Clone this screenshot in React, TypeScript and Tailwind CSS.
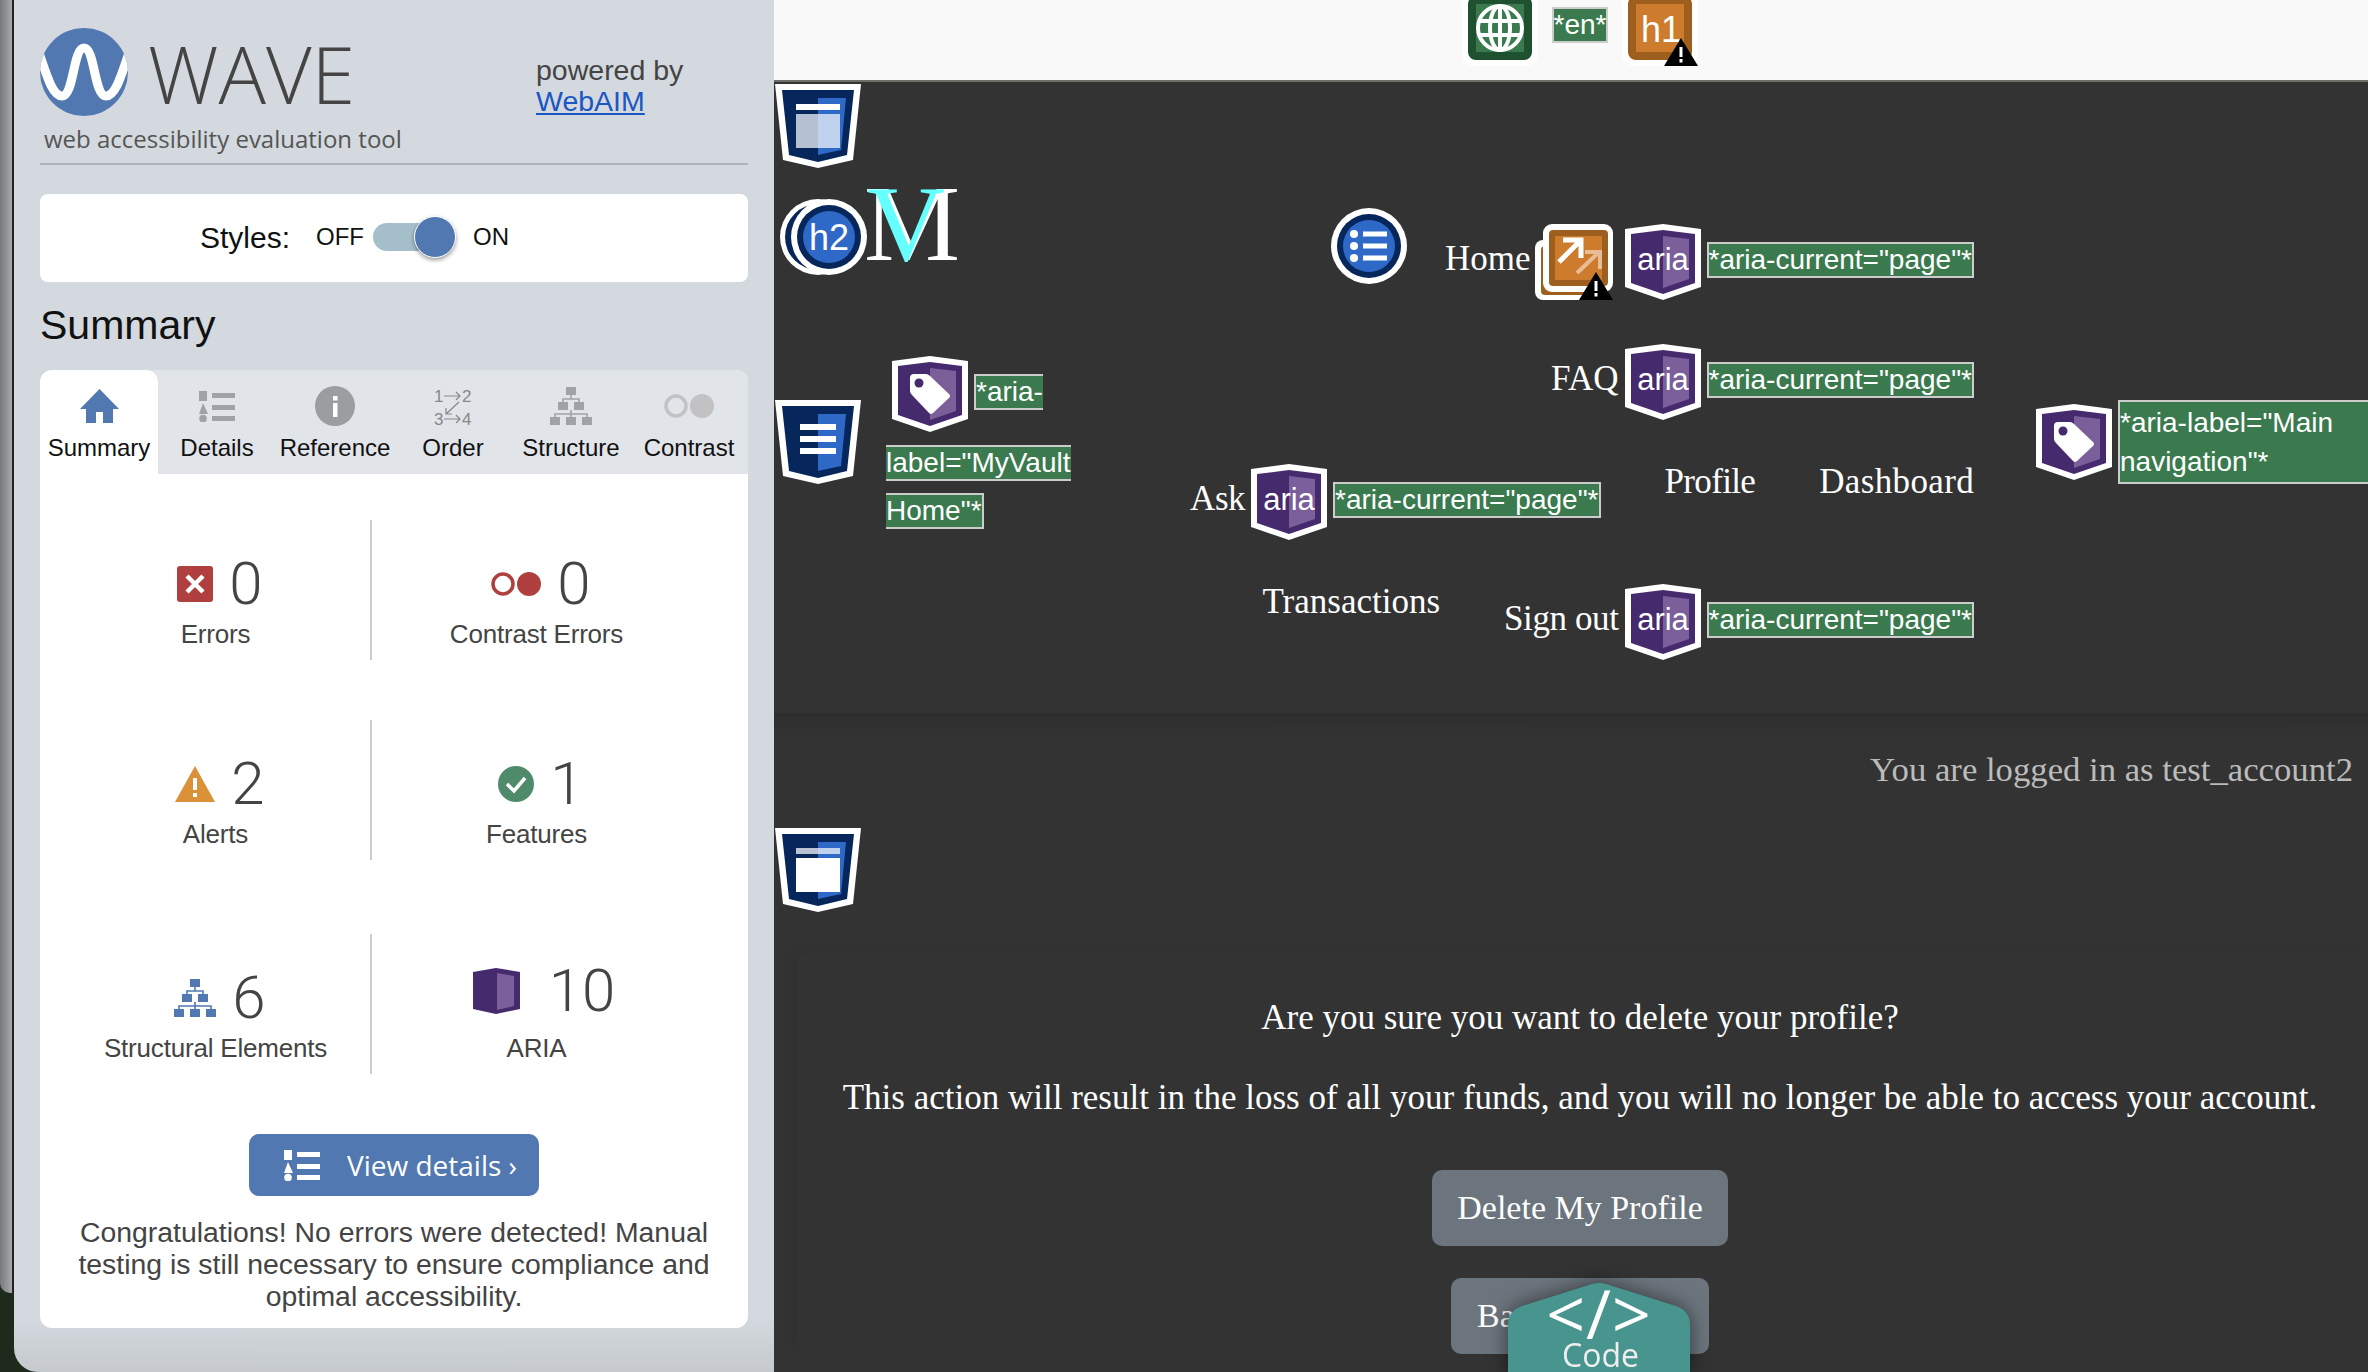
import React from 'react'

function Warn({ className }: { className: string }) {
  return (
    <svg viewBox="0 0 34 28" className={className}>
      <polygon points="17,0 34,28 0,28" fill="#000" />
      <rect x="15.5" y="9" width="3" height="10" fill="#fff" />
      <rect x="15.5" y="21" width="3" height="3.5" fill="#fff" />
    </svg>
  )
}

function AriaHex({ children }: { children?: React.ReactNode }) {
  return (
    <svg viewBox="0 0 76 76" className="w-[76px] h-[76px] shrink-0">
      <polygon points="0,5 38,0 76,5 76,63 38,76 0,63" fill="#fff" />
      <polygon points="6,10 38,6 70,10 70,59 38,70 6,59" fill="#452a6e" />
      <polygon points="38,12 64,15 64,55 38,64" fill="#7a5f9b" />
      {children}
    </svg>
  )
}

function AriaIcon() {
  return (
    <AriaHex>
      <text x="38" y="46" textAnchor="middle" fontSize="31" fill="#fff" fontFamily="Liberation Sans, sans-serif">aria</text>
    </AriaHex>
  )
}

function TagIcon() {
  return (
    <AriaHex>
      <path d="M22 18H34Q36 18 38 20L57 38Q59 40 57 42L41 57Q39 59 37 57L20 39Q18 37 18 35V22Q18 18 22 18Z" fill="#fff" />
      <circle cx="27" cy="27" r="4.5" fill="#452a6e" />
    </AriaHex>
  )
}

function Attr({ children, className = '' }: { children: React.ReactNode; className?: string }) {
  return (
    <span className={`block h-9 bg-[#3a7a4e] border-2 border-[#cccccc] text-white text-[28px] leading-[32px] whitespace-nowrap font-['Liberation_Sans',sans-serif] ${className}`}>
      {children}
    </span>
  )
}

function Shield({ kind }: { kind: 'header' | 'nav' | 'main' }) {
  return (
    <svg viewBox="0 0 86 84" className="w-[86px] h-[84px] shrink-0">
      <polygon points="0,0 86,0 78,76 43,84 8,76" fill="#fff" />
      <polygon points="7,6 79,6 72,71 43,78 14,71" fill="#06265c" />
      <polygon points="43,14 71,14 66,66 43,71" fill="#2f69c8" />
      {kind === 'header' && (
        <>
          <rect x="21" y="20" width="44" height="6" fill="#fff" />
          <rect x="21" y="30" width="22" height="34" fill="#b5c0d2" />
          <rect x="43" y="30" width="22" height="34" fill="#c0d2ee" />
        </>
      )}
      {kind === 'nav' && (
        <>
          <rect x="25" y="24" width="36" height="6" fill="#fff" />
          <rect x="25" y="36" width="36" height="6" fill="#fff" />
          <rect x="25" y="48" width="36" height="6" fill="#fff" />
        </>
      )}
      {kind === 'main' && (
        <>
          <rect x="21" y="20" width="22" height="6" fill="#b9c3d3" />
          <rect x="43" y="20" width="22" height="6" fill="#c0d2ee" />
          <rect x="21" y="30" width="44" height="34" fill="#fff" />
        </>
      )}
    </svg>
  )
}

function TreeIcon({ color, className }: { color: string; className: string }) {
  return (
    <svg viewBox="0 0 42 38" className={className}>
      <g fill={color}>
        <rect x="16" y="0" width="10" height="8" />
        <rect x="8" y="15" width="10" height="8" />
        <rect x="24" y="15" width="10" height="8" />
        <rect x="0" y="30" width="10" height="8" />
        <rect x="16" y="30" width="10" height="8" />
        <rect x="32" y="30" width="10" height="8" />
      </g>
      <path d="M21 8V12M13 15V12H29V15M21 23V27M5 30V27H37V30M21 27V30" stroke={color} strokeWidth="1.6" fill="none" />
    </svg>
  )
}

function DetailsIcon({ color, className }: { color: string; className: string }) {
  return (
    <svg viewBox="0 0 36 31" className={className}>
      <g fill={color}>
        <rect x="0" y="0" width="8" height="10" />
        <polygon points="4,12 9,23 0,23" />
        <circle cx="4" cy="27.5" r="3.800" />
        <rect x="13" y="2" width="23" height="5" />
        <rect x="13" y="14" width="23" height="5" />
        <rect x="13" y="25" width="23" height="5" />
      </g>
    </svg>
  )
}

function Tab({ label, active, icon }: { label: string; active?: boolean; icon: React.ReactNode }) {
  return (
    <div className={`w-[118px] h-[104px] flex flex-col items-center ${active ? 'bg-white rounded-t-[12px]' : ''}`}>
      <div className="h-[46px] mt-[13px] flex items-center justify-center">{icon}</div>
      <span className="mt-[4px] text-[24px] leading-[30px] text-[#111] whitespace-nowrap">{label}</span>
    </div>
  )
}

function Stat({ icon, value, label, left, numClass = 'pt-[34px]', labelClass = 'mt-[5px]' }: {
  icon: React.ReactNode; value: string; label: string; left?: boolean; numClass?: string; labelClass?: string
}) {
  return (
    <div className={`h-[140px] flex flex-col items-center ${left ? 'w-[332px] pl-[20px] border-r-2 border-[#cccccc]' : 'w-[328px]'} ${numClass}`}>
      <div className="h-[60px] ml-[10px] flex items-center gap-[16px]">
        {icon}
        <span className="text-[60px] leading-[60px] font-light text-[#444] font-['Roboto',sans-serif]">{value}</span>
      </div>
      <span className={`ml-px text-[26px] leading-[30px] text-[#444] whitespace-nowrap tracking-[-0.2px] ${labelClass}`}>{label}</span>
    </div>
  )
}

function Sidebar() {
  return (
    <aside className="w-[760px] h-[1372px] shrink-0 px-[26px] rounded-bl-[24px] bg-gradient-to-b from-[#d3d9de] from-[96%] to-[#c6cacf] font-['Liberation_Sans',sans-serif]">
      <div className="h-[165px] pt-[28px] border-b-2 border-[#b0b4b8]">
        <div className="flex h-[88px]">
          <svg viewBox="0 0 88 88" className="w-[88px] h-[88px] shrink-0">
            <defs>
              <clipPath id="wave-clip">
                <circle cx="44" cy="44" r="44" />
              </clipPath>
            </defs>
            <circle cx="44" cy="44" r="44" fill="#5178b0" />
            <path clipPath="url(#wave-clip)" d="M-2 22C6 45 12 68 22 68C34 68 33 20 44 20C55 20 54 68 66 68C76 68 82 45 90 22" stroke="#fff" strokeWidth="9" fill="none" />
          </svg>
          <span className="ml-[20px] mt-[2px] w-[388px] text-[79px] leading-[88px] font-light text-[#444] font-['Open_Sans',sans-serif]">WAVE</span>
          <div className="mt-[27px] text-[28.5px] leading-[31px] text-[#444]">
            <div>powered by</div>
            <a className="text-[#1a56c4] underline">WebAIM</a>
          </div>
        </div>
        <div className="ml-[4px] mt-[5px] text-[24px] leading-[36px] text-[#555] font-['Open_Sans',sans-serif]">web accessibility evaluation tool</div>
      </div>

      <div className="mt-[29px] h-[88px] pb-[2px] bg-white rounded-[8px] flex items-center pl-[160px] text-[#111]">
        <span className="text-[30px]">Styles:</span>
        <span className="ml-[26px] text-[24px]">OFF</span>
        <div className="relative ml-[9px] w-[80px] h-[28px] rounded-full bg-[#a5bfca]">
          <div className="absolute right-[-3px] top-[-7px] w-[42px] h-[42px] rounded-full bg-[#5178b0] border border-white shadow-[0_2px_4px_rgba(0,0,0,0.4)]" />
        </div>
        <span className="ml-[20px] text-[24px]">ON</span>
      </div>

      <h2 className="mt-[18px] text-[41px] leading-[50px] text-[#111]">Summary</h2>

      <div className="mt-[20px] rounded-[12px] bg-white overflow-hidden">
        <div className="flex h-[104px] bg-[#e1e4e9]">
          <Tab active label="Summary" icon={
            <svg viewBox="0 0 39 34" className="w-[39px] h-[34px]">
              <path d="M19.5 0L39 20H33V34H23V23H16V34H6V20H0Z" fill="#5178b0" />
            </svg>
          } />
          <Tab label="Details" icon={<DetailsIcon color="#a0a2a6" className="w-[36px] h-[31px]" />} />
          <Tab label="Reference" icon={
            <svg viewBox="0 0 40 40" className="w-[40px] h-[40px]">
              <circle cx="20" cy="20" r="20" fill="#9b9da1" />
              <rect x="18" y="10" width="4.500" height="4.500" fill="#fff" />
              <rect x="18" y="17" width="4.500" height="14" fill="#fff" />
            </svg>
          } />
          <Tab label="Order" icon={
            <svg viewBox="0 0 38 39" className="w-[38px] h-[39px]">
              <text x="0" y="15" fontSize="17" fill="#888" fontFamily="Liberation Sans, sans-serif">1</text>
              <text x="28" y="15" fontSize="17" fill="#888" fontFamily="Liberation Sans, sans-serif">2</text>
              <text x="0" y="38" fontSize="17" fill="#888" fontFamily="Liberation Sans, sans-serif">3</text>
              <text x="28" y="38" fontSize="17" fill="#888" fontFamily="Liberation Sans, sans-serif">4</text>
              <path d="M10 9H26M22 5L26 9L22 13M10 32H26M22 28L26 32L22 36M25 15L12 27M12 21V27H18" stroke="#888" strokeWidth="1.2" fill="none" />
            </svg>
          } />
          <Tab label="Structure" icon={<TreeIcon color="#a0a2a6" className="w-[42px] h-[38px]" />} />
          <Tab label="Contrast" icon={
            <svg viewBox="0 0 50 24" className="w-[50px] h-[24px]">
              <circle cx="12" cy="12" r="10" fill="none" stroke="#c2c2c4" strokeWidth="3.500" />
              <circle cx="38" cy="12" r="12" fill="#c2c2c4" />
            </svg>
          } />
        </div>

        <div className="pt-[46px] pb-[16px]">
          <div className="flex">
            <Stat left value="0" label="Errors" icon={
              <svg viewBox="0 0 36 36" className="w-[36px] h-[36px]">
                <rect width="36" height="36" rx="3" fill="#b03f3f" />
                <path d="M10 10L26 26M26 10L10 26" stroke="#fff" strokeWidth="4.500" />
              </svg>
            } />
            <Stat value="0" label="Contrast Errors" icon={
              <svg viewBox="0 0 50 24" className="w-[50px] h-[24px]">
                <circle cx="12" cy="12" r="10" fill="none" stroke="#b03f3f" strokeWidth="3.500" />
                <circle cx="38" cy="12" r="12" fill="#b03f3f" />
              </svg>
            } />
          </div>
          <div className="flex mt-[60px]">
            <Stat left value="2" label="Alerts" icon={
              <svg viewBox="0 0 40 36" className="w-[40px] h-[36px]">
                <polygon points="20,0 40,36 0,36" fill="#da9137" />
                <rect x="18" y="12" width="4" height="12" fill="#fff" />
                <rect x="18" y="27" width="4" height="4" fill="#fff" />
              </svg>
            } />
            <Stat value="1" label="Features" icon={
              <svg viewBox="0 0 36 36" className="w-[36px] h-[36px]">
                <circle cx="18" cy="18" r="18" fill="#4f8a6b" />
                <path d="M9 18L16 25L27 12" stroke="#fff" strokeWidth="3.500" fill="none" />
              </svg>
            } />
          </div>
          <div className="flex mt-[74px]">
            <Stat left value="6" label="Structural Elements" icon={<TreeIcon color="#5178b0" className="w-[42px] h-[38px]" />} />
            <Stat value="10" label="ARIA" numClass="pt-[27px]" labelClass="mt-[12px]" icon={
              <svg viewBox="0 0 47 46" className="w-[47px] h-[46px] ml-[6px] mr-[13px]">
                <polygon points="0,4 23,0 47,4 47,41 23,46 0,41" fill="#452a6e" />
                <polygon points="24,5 41,8 41,38 24,42" fill="#7a5f9b" />
              </svg>
            } />
          </div>

          <div className="mt-[60px] mx-auto w-[290px] h-[62px] rounded-[10px] bg-[#5178b0] flex items-center pl-[35px] text-white font-['Open_Sans',sans-serif]">
            <DetailsIcon color="#fff" className="w-[36px] h-[31px]" />
            <span className="ml-[27px] text-[28px] whitespace-nowrap">View details ›</span>
          </div>

          <p className="mt-[20px] px-[20px] text-center text-[28.400px] leading-[32px] text-[#444]">
            Congratulations! No errors were detected! Manual<br />
            testing is still necessary to ensure compliance and<br />
            optimal accessibility.
          </p>
        </div>
      </div>
    </aside>
  )
}

function NavText({ children, className = '' }: { children: React.ReactNode; className?: string }) {
  return <span className={`h-9 leading-9 whitespace-nowrap ${className}`}>{children}</span>
}

function NavAria({ label, labelClass = '' }: { label: string; labelClass?: string }) {
  return (
    <div className="flex items-center gap-[6px]">
      <span className={`whitespace-nowrap pb-[6px] ${labelClass}`}>{label}</span>
      <AriaIcon />
      <Attr className="mb-[4px]">*aria-current="page"*</Attr>
    </div>
  )
}

function Header() {
  return (
    <header className="h-[631px] flex text-[35px] text-white">
      <div className="w-[310px] shrink-0 pl-px pt-[2px]">
        <Shield kind="header" />
        <div className="mt-[20px] ml-[5px] h-[87px] flex">
          <svg viewBox="0 0 87 76" className="w-[87px] h-[76px] mt-[11px]">
            <circle cx="38" cy="38" r="38" fill="#fff" />
            <circle cx="38" cy="38" r="33" fill="#06265c" />
            <circle cx="49" cy="38" r="38" fill="#fff" />
            <circle cx="49" cy="38" r="32" fill="#06265c" />
            <circle cx="49" cy="38" r="26" fill="#2f69c8" />
            <text x="49" y="51" textAnchor="middle" fontSize="36" fill="#fff" fontFamily="Liberation Sans, sans-serif">h2</text>
          </svg>
          <div className="relative -ml-[3px] -mt-[8px] h-[87px] text-[108px] leading-[87px] font-['Liberation_Serif',serif]">
            M
            <span className="absolute left-[3px] top-0 text-[#66ffff]">V</span>
          </div>
        </div>
        <div className="mt-[81px] flex items-start">
          <div className="mt-[44px]"><Shield kind="nav" /></div>
          <div className="ml-[25px]">
            <div className="flex items-start ml-[6px]">
              <TagIcon />
              <Attr className="mt-[18px] ml-[6px] border-r-0">*aria-</Attr>
            </div>
            <Attr className="mt-[13px] w-fit border-x-0">label="MyVault</Attr>
            <Attr className="mt-[12px] w-fit border-l-0">Home"*</Attr>
          </div>
        </div>
      </div>

      <nav className="w-[890px] shrink-0 pt-[142px] flex flex-col items-end">
        <div className="h-[120px] flex items-start">
          <svg viewBox="0 0 76 76" className="w-[76px] h-[76px] -mt-[16px] mr-[38px]">
            <circle cx="38" cy="38" r="38" fill="#fff" />
            <circle cx="38" cy="38" r="32" fill="#06265c" />
            <circle cx="38" cy="38" r="26" fill="#2f69c8" />
            <g fill="#fff">
              <circle cx="23" cy="26" r="4" />
              <circle cx="23" cy="38" r="4" />
              <circle cx="23" cy="50" r="4" />
              <rect x="32" y="23.500" width="24" height="5" />
              <rect x="32" y="35.500" width="24" height="5" />
              <rect x="32" y="47.500" width="24" height="5" />
            </g>
          </svg>
          <div className="flex items-center">
            <span className="whitespace-nowrap mr-[4px] pb-[6px]">Home</span>
            <div className="relative w-[78px] h-[76px]">
              <svg viewBox="0 0 78 76" className="w-[78px] h-[76px]">
                <rect x="0" y="16" width="60" height="60" rx="8" fill="#fff" />
                <rect x="6" y="22" width="50" height="49" rx="4" fill="#9e5f1e" />
                <rect x="8" y="0" width="70" height="68" rx="9" fill="#fff" />
                <rect x="14" y="6" width="59" height="56" rx="4" fill="#9e5f1e" />
                <rect x="20" y="12" width="47" height="44" fill="#cd7c2d" />
                <path d="M24 38L44 18M28 16H46V34" stroke="#fff" strokeWidth="5" fill="none" />
                <path d="M42 49L63 29M50 28H65V45" stroke="#e8bd93" strokeWidth="4" fill="none" />
              </svg>
              <Warn className="absolute right-0 bottom-0 w-[34px] h-[28px]" />
            </div>
            <div className="flex items-center gap-[6px] ml-[12px]">
              <AriaIcon />
              <Attr className="mb-[4px]">*aria-current="page"*</Attr>
            </div>
          </div>
        </div>
        <div className="h-[120px]"><NavAria label="FAQ" /></div>
        <div className="h-[120px] flex items-start gap-[64px]">
          <NavAria label="Ask" labelClass="tracking-[-0.5px]" />
          <NavText className="tracking-[-0.65px]">Profile</NavText>
          <NavText className="tracking-[0.35px]">Dashboard</NavText>
        </div>
        <div className="h-[120px] flex items-start gap-[64px]">
          <NavText>Transactions</NavText>
          <NavAria label="Sign out" labelClass="tracking-[-0.4px]" />
        </div>
      </nav>

      <div className="ml-[62px] pt-[318px] flex items-start gap-[6px]">
        <div className="mt-[4px]"><TagIcon /></div>
        <div className="w-[300px] h-[84px] bg-[#3a7a4e] border-2 border-[#cccccc] text-[28px] leading-[39px] pt-[1px] font-['Liberation_Sans',sans-serif]">
          *aria-label="Main<br />navigation"*
        </div>
      </div>
    </header>
  )
}

function Main() {
  return (
    <main className="relative flex-1 min-w-0 h-[1372px] bg-[#333333] font-['Liberation_Serif',serif]">
      <div className="h-[82px] border-b-2 border-[#6c7168] bg-[#f9f9f9] flex justify-center items-start gap-[14px] pl-[18px]">
        <svg viewBox="0 0 76 76" className="w-[76px] h-[76px] -mt-[10px] shrink-0">
          <rect width="76" height="76" rx="12" fill="#fff" />
          <rect x="6" y="6" width="64" height="64" rx="8" fill="#1f5030" />
          <rect x="14" y="14" width="48" height="48" fill="#3a7a4e" />
          <g stroke="#fff" strokeWidth="4" fill="none">
            <circle cx="38" cy="38" r="22" />
            <ellipse cx="38" cy="38" rx="10" ry="22" />
            <path d="M38 16V60M17 31H59M17 45H59" />
          </g>
        </svg>
        <Attr className="mt-[7px]">*en*</Attr>
        <div className="relative w-[76px] h-[76px] -mt-[10px] shrink-0">
          <svg viewBox="0 0 76 76" className="w-[76px] h-[76px]">
            <rect width="76" height="76" rx="12" fill="#fff" />
            <rect x="6" y="6" width="64" height="64" rx="8" fill="#9e5f1e" />
            <rect x="14" y="14" width="48" height="48" fill="#cd7c2d" />
            <text x="39" y="52" textAnchor="middle" fontSize="36" fill="#fff" fontFamily="Liberation Sans, sans-serif">h1</text>
          </svg>
          <Warn className="absolute right-0 bottom-0 w-[34px] h-[28px]" />
        </div>
      </div>

      <Header />

      <div className="h-[115px] pr-[15px] flex items-center justify-end bg-gradient-to-b from-[#2e2e2e] to-[#333333] to-[25%] text-[34.700px] text-[#bbbbbb]">
        You are logged in as test_account2
      </div>
      <div className="pl-px"><Shield kind="main" /></div>

      <section className="mt-[41px] ml-[23px] pt-[45px] pr-[5px] rounded-[12px] shadow-[-6px_-4px_10px_rgba(0,0,0,0.05)] text-center text-white text-[35px] leading-[40px]">
        <p>Are you sure you want to delete your profile?</p>
        <p className="mt-[40px] whitespace-nowrap">This action will result in the loss of all your funds, and you will no longer be able to access your account.</p>
        <div className="mt-[52px] flex flex-col items-center gap-[32px]">
          <button className="w-[296px] h-[76px] rounded-[10px] bg-[#6c757d] text-[34px] text-white">Delete My Profile</button>
          <button className="w-[258px] h-[76px] rounded-[10px] bg-[#6c757d] text-[34px] text-white">Back to Profile</button>
        </div>
      </section>

      <div className="absolute left-[734px] top-[1283px] w-[182px] h-[89px] drop-shadow-[0_0_10px_rgba(0,0,0,0.55)] font-['Open_Sans',sans-serif]">
        <svg viewBox="0 0 182 89" className="absolute inset-0 w-[182px] h-[89px]">
          <path d="M0 89V42Q0 28 14 23L84 1Q91 -1 98 1L168 23Q182 28 182 42V89Z" fill="#47958e" />
        </svg>
        <div className="relative flex flex-col items-center text-white">
          <span className="text-[68px] leading-[60px] tracking-[1px] whitespace-nowrap">&lt;/&gt;</span>
          <span className="ml-[3px] text-[32px] leading-[24px] text-[#eeeeee]">Code</span>
        </div>
      </div>
    </main>
  )
}

export default function App() {
  return (
    <div className="relative w-[2368px] h-[1372px] overflow-hidden flex bg-[#1e2b1c]">
      <div className="w-[14px] h-[1293px] shrink-0 bg-gradient-to-r from-[#77797c] to-[#a6a9ac] border-r-2 border-[#222222] rounded-bl-[10px]" />
      <Sidebar />
      <Main />
    </div>
  )
}
